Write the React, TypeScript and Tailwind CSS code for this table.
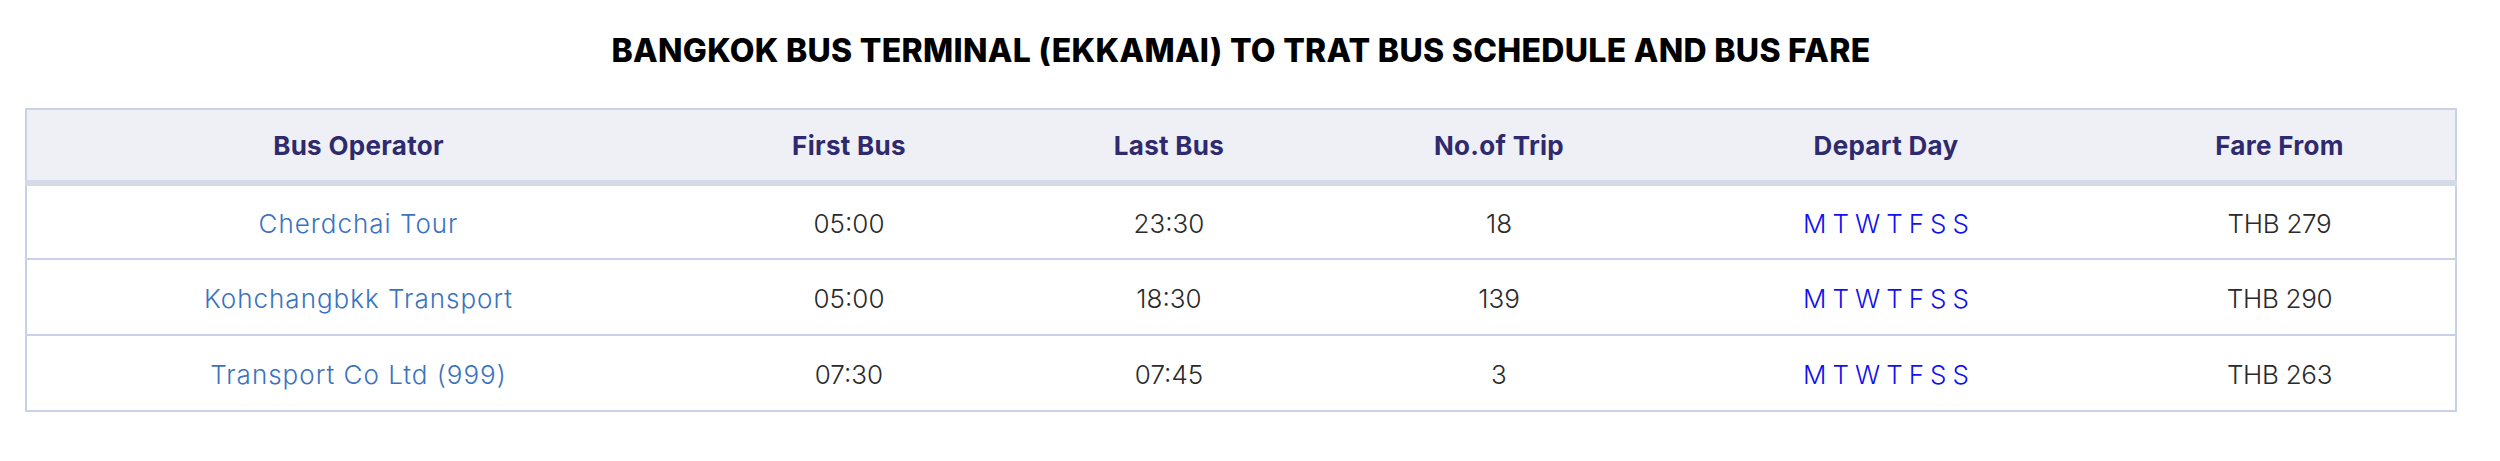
const rows = [
    { operator: "Cherdchai Tour", first: "05:00", last: "23:30", trips: "18", fare: "THB 279" },
    { operator: "Kohchangbkk Transport", first: "05:00", last: "18:30", trips: "139", fare: "THB 290" },
    { operator: "Transport Co Ltd (999)", first: "07:30", last: "07:45", trips: "3", fare: "THB 263" },
];

const days = ["M", "T", "W", "T", "F", "S", "S"];

export default function App() {
    return (
        <div className="w-[2482px] bg-white px-[25px] pt-[34px] pb-[48px] font-['Inter',sans-serif]">
            <h2 className="text-center text-[32px] leading-[34px] font-extrabold uppercase text-black tracking-[0.3px]">
                Bangkok Bus Terminal (Ekkamai) to Trat Bus Schedule and Bus Fare
            </h2>

            <table className="mt-[40px] w-full table-fixed border-collapse border-2 border-[#c8d1e8] text-center">
                <colgroup>
                    <col className="w-[664px]" />
                    <col className="w-[318px]" />
                    <col className="w-[322px]" />
                    <col className="w-[338px]" />
                    <col className="w-[436px]" />
                    <col />
                </colgroup>
                <thead>
                    <tr className="bg-[#eef0f5] border-b-[6px] border-[#d5dae8] text-[26px] font-bold text-[#2f2a6e] tracking-[0.3px]">
                        <th className="h-[74px] font-bold">Bus Operator</th>
                        <th className="font-bold">First Bus</th>
                        <th className="font-bold">Last Bus</th>
                        <th className="font-bold">No.of Trip</th>
                        <th className="font-bold">Depart Day</th>
                        <th className="font-bold">Fare From</th>
                    </tr>
                </thead>
                <tbody className="text-[26px] font-light text-[#2a2a2a]">
                    {rows.map((r) => (
                        <tr key={r.operator} className="border-b-2 border-[#c8d1e8]">
                            <td className="h-[76px] pt-[2px]">
                                <a href="#" className="text-[#3b73bf] tracking-[1px]">{r.operator}</a>
                            </td>
                            <td className="pt-[2px]">{r.first}</td>
                            <td className="pt-[2px]">{r.last}</td>
                            <td className="pt-[2px]">{r.trips}</td>
                            <td className="pt-[2px]">
                                <span className="inline-flex gap-[6px] text-[#1010f0]">
                                    {days.map((d, i) => (
                                        <span key={i}>{d}</span>
                                    ))}
                                </span>
                            </td>
                            <td className="pt-[2px] tracking-[-0.3px]">{r.fare}</td>
                        </tr>
                    ))}
                </tbody>
            </table>
        </div>
    );
}
